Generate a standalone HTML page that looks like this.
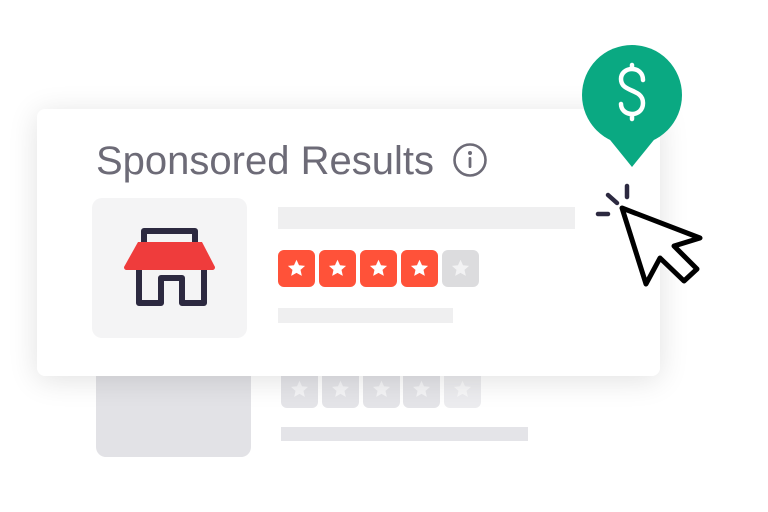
<!DOCTYPE html>
<html><head><style>
body{margin:0;width:768px;height:512px;background:#fff;position:relative;overflow:hidden;font-family:"Liberation Sans",sans-serif}
.a{position:absolute}
.star{position:absolute;width:37px;height:37px;border-radius:6px}
.star svg{position:absolute;left:8px;top:8px}
</style></head><body>
<div class="a" style="left:96px;top:360px;width:155px;height:97px;background:#e2e2e6;border-radius:10px"></div>
<div class="star" style="left:281px;top:371px;background:#e4e4e8"><svg width="21" height="21" viewBox="0 0 24 24"><path d="M12 2l2.9 6.3 6.9.7-5.2 4.6 1.5 6.8L12 17l-6.1 3.4 1.5-6.8L2.2 9l6.9-.7z" fill="#f4f4f6"/></svg></div>
<div class="star" style="left:322px;top:371px;background:#e4e4e8"><svg width="21" height="21" viewBox="0 0 24 24"><path d="M12 2l2.9 6.3 6.9.7-5.2 4.6 1.5 6.8L12 17l-6.1 3.4 1.5-6.8L2.2 9l6.9-.7z" fill="#f4f4f6"/></svg></div>
<div class="star" style="left:363px;top:371px;background:#e4e4e8"><svg width="21" height="21" viewBox="0 0 24 24"><path d="M12 2l2.9 6.3 6.9.7-5.2 4.6 1.5 6.8L12 17l-6.1 3.4 1.5-6.8L2.2 9l6.9-.7z" fill="#f4f4f6"/></svg></div>
<div class="star" style="left:403px;top:371px;background:#e4e4e8"><svg width="21" height="21" viewBox="0 0 24 24"><path d="M12 2l2.9 6.3 6.9.7-5.2 4.6 1.5 6.8L12 17l-6.1 3.4 1.5-6.8L2.2 9l6.9-.7z" fill="#f4f4f6"/></svg></div>
<div class="star" style="left:444px;top:371px;background:#ececef"><svg width="21" height="21" viewBox="0 0 24 24"><path d="M12 2l2.9 6.3 6.9.7-5.2 4.6 1.5 6.8L12 17l-6.1 3.4 1.5-6.8L2.2 9l6.9-.7z" fill="#f7f7f8"/></svg></div>
<div class="a" style="left:281px;top:427px;width:247px;height:14px;background:#e4e4e8"></div>

<div class="a" style="left:37px;top:109px;width:623px;height:267px;background:#fff;border-radius:8px;box-shadow:0 4px 30px rgba(0,0,0,0.12)"></div>
<div class="a" style="left:96px;top:141px;font-size:40px;line-height:40px;color:#6d6b77;white-space:nowrap">Sponsored Results</div>
<svg class="a" style="left:452px;top:142px" width="36" height="36" viewBox="0 0 36 36"><circle cx="18" cy="18" r="15.5" fill="none" stroke="#6d6b77" stroke-width="2.6"/><circle cx="18" cy="11" r="2" fill="#6d6b77"/><rect x="16.6" y="15" width="2.8" height="11" rx="1.4" fill="#6d6b77"/></svg>

<div class="a" style="left:92px;top:198px;width:155px;height:140px;background:#f4f4f5;border-radius:10px"></div>
<svg class="a" style="left:120px;top:225px" width="100" height="95" viewBox="0 0 100 95">
<path d="M24 21V6h51v15" fill="none" stroke="#2c2940" stroke-width="6" stroke-linejoin="round"/>
<path d="M19 40v38h22V53h21v25h22V40" fill="none" stroke="#2c2940" stroke-width="6" stroke-linejoin="round"/>
<path d="M18 17h64l13 25c0 2-1 3-3 3H7c-2 0-3-1-3-3z" fill="#ef3c3c"/>
</svg>

<div class="a" style="left:278px;top:207px;width:297px;height:22px;background:#efeff0"></div>
<div class="star" style="left:278px;top:250px;background:#ff5239"><svg width="21" height="21" viewBox="0 0 24 24"><path d="M12 2l2.9 6.3 6.9.7-5.2 4.6 1.5 6.8L12 17l-6.1 3.4 1.5-6.8L2.2 9l6.9-.7z" fill="#fff"/></svg></div>
<div class="star" style="left:319px;top:250px;background:#ff5239"><svg width="21" height="21" viewBox="0 0 24 24"><path d="M12 2l2.9 6.3 6.9.7-5.2 4.6 1.5 6.8L12 17l-6.1 3.4 1.5-6.8L2.2 9l6.9-.7z" fill="#fff"/></svg></div>
<div class="star" style="left:360px;top:250px;background:#ff5239"><svg width="21" height="21" viewBox="0 0 24 24"><path d="M12 2l2.9 6.3 6.9.7-5.2 4.6 1.5 6.8L12 17l-6.1 3.4 1.5-6.8L2.2 9l6.9-.7z" fill="#fff"/></svg></div>
<div class="star" style="left:401px;top:250px;background:#ff5239"><svg width="21" height="21" viewBox="0 0 24 24"><path d="M12 2l2.9 6.3 6.9.7-5.2 4.6 1.5 6.8L12 17l-6.1 3.4 1.5-6.8L2.2 9l6.9-.7z" fill="#fff"/></svg></div>
<div class="star" style="left:442px;top:250px;background:#dcdcde"><svg width="21" height="21" viewBox="0 0 24 24"><path d="M12 2l2.9 6.3 6.9.7-5.2 4.6 1.5 6.8L12 17l-6.1 3.4 1.5-6.8L2.2 9l6.9-.7z" fill="#f2f2f3"/></svg></div>
<div class="a" style="left:278px;top:308px;width:175px;height:15px;background:#efeff0"></div>

<svg class="a" style="left:580px;top:40px" width="104" height="130" viewBox="0 0 104 130">
<path d="M52 127L18 85L86 85Z" fill="#0aa982"/>
<circle cx="52" cy="55" r="50" fill="#0aa982"/>
<path d="M63 40c0-7-5-11-11-11s-11 4-11 10c0 14 22 9 22 24 0 7-5 11-11 11s-11-4-11-10M52 25v4M52 74v5" fill="none" stroke="#fff" stroke-width="4.5" stroke-linecap="round"/>
</svg>

<svg class="a" style="left:590px;top:180px" width="125" height="115" viewBox="0 0 125 115">
<path d="M37 6v11M18 15l9 8M8 34h10" stroke="#2c2940" stroke-width="4.5" stroke-linecap="round"/>
<path d="M32 28L56 104L70 78L94 101L107 89L84 66L110 58Z" fill="#fff" stroke="#000" stroke-width="5" stroke-linejoin="round"/>
</svg>
</body></html>
